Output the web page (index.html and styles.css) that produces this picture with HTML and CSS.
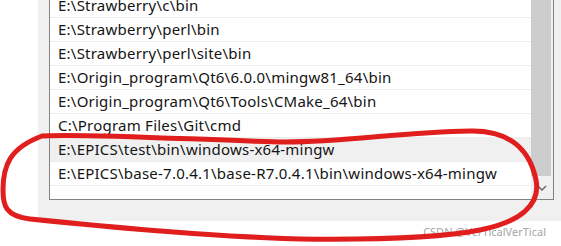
FILE: index.html
```html
<!DOCTYPE html>
<html>
<head>
<meta charset="utf-8">
<link rel="stylesheet" href="styles.css">
</head>
<body>
<div class="stage">
  <div class="panel">
    <div class="listbox">
      <div class="rows">
        <div class="rows-inner">
          <div class="row">E:\Strawberry\c\bin</div>
          <div class="row">E:\Strawberry\perl\bin</div>
          <div class="row">E:\Strawberry\perl\site\bin</div>
          <div class="row">E:\Origin_program\Qt6\6.0.0\mingw81_64\bin</div>
          <div class="row">E:\Origin_program\Qt6\Tools\CMake_64\bin</div>
          <div class="row">C:\Program Files\Git\cmd</div>
          <div class="row row-hover">E:\EPICS\test\bin\windows-x64-mingw</div>
          <div class="row">E:\EPICS\base-7.0.4.1\base-R7.0.4.1\bin\windows-x64-mingw</div>
          <div class="row"></div>
        </div>
      </div>
      <div class="scrollbar">
        <div class="thumb"></div>
        <div class="arrow">
          <svg width="10" height="6" viewBox="0 0 10 6"><path d="M1 1 L5 5 L9 1" fill="none" stroke="#606060" stroke-width="1.3"/></svg>
        </div>
      </div>
    </div>
  </div>
  <div class="watermark">CSDN @VerTicalVerTical</div>
  <svg class="annotation" width="561" height="246" viewBox="0 0 561 246">
    <path d="M42 136 C80 133 200 140 280 142 C340 143 400 132 470 131 C510 130 530 150 536 180 C541 205 520 222 480 230 C440 238 380 240 300 239 C200 236 100 226 30 219 C5 216 3 205 3 190 C3 165 10 148 42 136 Z" fill="none" stroke="#e01e1e" stroke-width="5" stroke-linecap="round" stroke-linejoin="round"/>
  </svg>
</div>
</body>
</html>
```

FILE: styles.css
```css
body {
  margin: 0;
  background: #ffffff;
  font-family: "Noto Sans", "Open Sans", "DejaVu Sans", sans-serif;
}

.stage {
  position: relative;
  width: 561px;
  height: 246px;
  overflow: hidden;
}

.panel {
  margin-left: 38px;
  height: 221px;
  background: #f0f0f0;
  padding-left: 11px;
  box-sizing: border-box;
}

.listbox {
  width: 505px;
  height: 200px;
  box-sizing: border-box;
  border: 1px solid #828282;
  border-top: 0;
  background: #ffffff;
  display: flex;
}

.rows {
  flex: 1;
  overflow: hidden;
}

.rows-inner {
  margin-top: -6px;
}

.row {
  height: 24px;
  box-sizing: border-box;
  border-bottom: 1px solid #ececec;
  padding-left: 8px;
  line-height: 23px;
  font-size: 15px;
  letter-spacing: 0.23px;
  color: #141414;
  white-space: nowrap;
}

.row-hover {
  background: #f0f0f0;
}

.scrollbar {
  width: 22px;
  background: #f0f0f0;
  display: flex;
  flex-direction: column;
}

.thumb {
  height: 176px;
  width: 20px;
  background: #cdcdcd;
}

.arrow {
  height: 23px;
  display: flex;
  justify-content: center;
  align-items: center;
}

.watermark {
  position: absolute;
  right: 15px;
  top: 224px;
  font-size: 11px;
  color: #a5a5a5;
  white-space: nowrap;
}

.annotation {
  position: absolute;
  left: 0;
  top: 0;
}
```
